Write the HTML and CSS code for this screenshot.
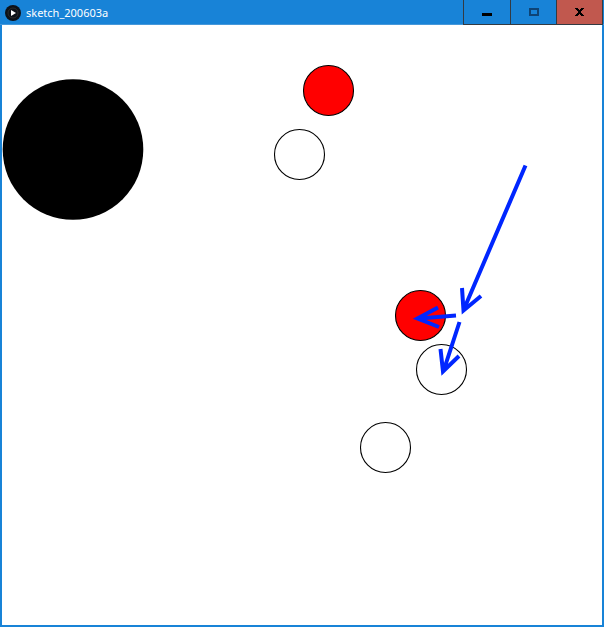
FILE: index.html
```html
<!DOCTYPE html>
<html lang="en">
<head>
<meta charset="utf-8">
<title>sketch_200603a</title>
<meta name="viewport" content="width=device-width, initial-scale=1">
<link rel="stylesheet" href="styles.css">
</head>
<body>
<div class="window">
  <header class="titlebar">
    <svg class="app-icon" viewBox="0 0 16 16" aria-hidden="true">
      <circle cx="8" cy="8" r="8" fill="#0c1118"/>
      <circle cx="8" cy="8" r="5" fill="none" stroke="#2c2c2c" stroke-width="1"/>
      <path d="M6 5v6l5-3z" fill="#fff"/>
    </svg>
    <h1 class="title">sketch_200603a</h1>
    <div class="controls">
      <button class="control" type="button" aria-label="Minimize">
        <svg class="glyph" viewBox="0 0 10 10"><path d="M0 6h10v3H0z" fill="#000"/></svg>
      </button>
      <button class="control" type="button" aria-label="Maximize" disabled>
        <svg class="glyph" viewBox="0 0 10 10"><path d="M1 2h8v6H1z" fill="none" stroke="#0e4475" stroke-width="2"/></svg>
      </button>
      <button class="control control-close" type="button" aria-label="Close">
        <svg class="glyph" viewBox="0 0 10 10"><path d="M0 1h3v1h1v1h1V2h1V1h3v1H8v1H7v1H6v2h1v1h1v1h1v1H6V8H5V7H4v1H3v1H0V8h1V7h1V6h1V4H2V3H1V2H0z" fill="#000"/></svg>
      </button>
    </div>
  </header>
  <main class="canvas">
    <svg class="sketch" viewBox="0 0 600 600" role="img" aria-label="Sketch with circles and arrows">
      <circle cx="71" cy="124.5" r="70.3"/>
      <g stroke="#000" stroke-width="1.1" fill="#fff">
        <circle cx="326.5" cy="65.5" r="25" fill="#f00"/>
        <circle cx="297.5" cy="129.5" r="25"/>
        <circle cx="418.5" cy="290.5" r="25" fill="#f00"/>
        <circle cx="439.5" cy="344.5" r="25"/>
        <circle cx="383.5" cy="422.5" r="25"/>
      </g>
      <g stroke="#0026ff" stroke-width="4" fill="none">
        <path d="M523.5 140.500L462 284M460 263L461.500 285.500L479 271"/>
        <path d="M454 290.500L417 293.500M436 282.500L415.500 293.500L437 302"/>
        <path d="M457.500 297L441.500 346M438.500 324L441 346.500L457 331"/>
      </g>
    </svg>
  </main>
</div>
</body>
</html>
```
FILE: styles.css
```css
* {
  box-sizing: border-box;
}

body {
  margin: 0;
  background: #1883d7;
}

.window {
  display: flex;
  flex-direction: column;
  min-height: 100vh;
  background: #1883d7;
}

.titlebar {
  display: flex;
  align-items: center;
  height: 25px;
  padding: 0 1px 0 5px;
  box-shadow: inset 0 -1px #4698da;
}

.app-icon {
  width: 16px;
  height: 16px;
}

.title {
  flex: 1;
  margin: 0 0 0 5px;
  color: #fff;
  font: 400 11px/24px "Noto Sans", "Open Sans", sans-serif;
}

.controls {
  display: flex;
  align-self: stretch;
  border-right: 1px solid #333a42;
}

.control {
  display: flex;
  align-items: center;
  justify-content: center;
  width: 46px;
  padding: 0;
  border: solid #333a42;
  border-width: 0 0 1px 1px;
  background: #1883d7;
}

.control:first-child {
  width: 47px;
}

.control-close {
  background: #c1584e;
}

.glyph {
  width: 10px;
  height: 10px;
}

.canvas {
  flex: 1;
  margin: 0 2px 2px;
  background: #fff;
}

.sketch {
  display: block;
  width: 100%;
}
```
